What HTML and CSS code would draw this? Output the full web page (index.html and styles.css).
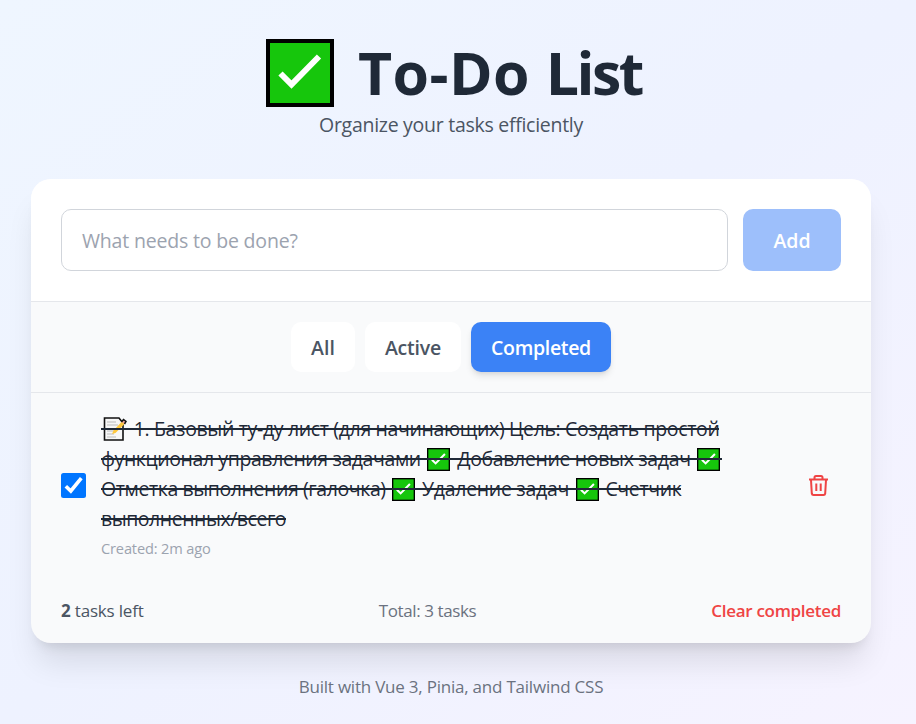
FILE: index.html
```html
<!DOCTYPE html>
<html lang="en">
<head>
<meta charset="utf-8">
<title>To-Do List</title>
<link rel="stylesheet" href="styles.css">
</head>
<body>
<svg class="sprite" aria-hidden="true">
  <symbol id="check" viewBox="0 0 68 68">
    <rect width="68" height="68" fill="#000"/>
    <rect x="4" y="4" width="60" height="60" fill="#16c60c"/>
    <path d="M14.500 34.500 25.500 45.500 53 17.500" fill="none" stroke="#fff" stroke-width="6"/>
  </symbol>
</svg>
<main class="page">
  <header class="header">
    <h1 class="title"><svg class="title-icon"><use href="#check"/></svg><span class="title-text">To-Do </span><span class="title-end">List</span></h1>
    <p class="subtitle"><span>Organize your tasks efficiently</span></p>
  </header>
  <section class="card">
    <form class="add-form">
      <div class="field"><span class="placeholder">What needs to be done?</span></div>
      <button class="add" type="button" disabled><span>Add</span></button>
    </form>
    <nav class="filters">
      <button class="filter filter-all" type="button">All</button>
      <button class="filter filter-active" type="button">Active</button>
      <button class="filter filter-completed" type="button">Completed</button>
    </nav>
    <article class="task">
      <svg class="checkbox" viewBox="0 0 25 25"><rect width="25" height="25" rx="2.5" fill="#0075ff"/><path d="M4.800 13.200 9.800 18 20.300 5.200" fill="none" stroke="#fff" stroke-width="3.6"/></svg>
      <div class="task-body">
        <p class="line l1"><svg class="memo" viewBox="0 0 24 26"><path d="M1.500 2H16L20 7V24H1.500Z" fill="#f7f7f7" stroke="#111" stroke-width="1.6"/><path d="M4 6h9M4 9h11M4 15h8M4 18h7M4 21h9" stroke="#bbb" stroke-width="1.2"/><path d="M9 18 10.500 14.500 19 5.500 22 7.500 12.500 17Z" fill="#ffc83d"/><path d="M18.500 6 20.500 3.500 23 5.500 21.500 8" fill="#f5a79b" stroke="#111" stroke-width="1.5"/></svg><span class="words"> 1. Базовый ту-ду лист (для начинающих) Цель: Создать простой</span></p>
        <p class="line l2"><span class="words w1">функционал управления задачами </span><svg class="emoji"><use href="#check"/></svg><span class="words w2"> Добавление новых задач </span><svg class="emoji"><use href="#check"/></svg></p>
        <p class="line l3"><span class="words w1">Отметка выполнения (галочка) </span><svg class="emoji"><use href="#check"/></svg><span class="words w2"> Удаление задач </span><svg class="emoji"><use href="#check"/></svg><span class="words"> Счетчик</span></p>
        <p class="line l4"><span class="words">выполненных/всего</span></p>
        <p class="created"><span>Created: 2m ago</span></p>
      </div>
      <svg class="trash" viewBox="0 0 25 25" fill="none" stroke="#ef4444" stroke-width="2"><path d="M3 6.500H22M8.500 6.500V4.500Q8.500 3 10 3H15Q16.500 3 16.500 4.500V6.500M5 7L5.800 20.500Q6 22 7.500 22H17.500Q19 22 19.200 20.500L20 7M10.300 10.500V18M14.700 10.500V18"/></svg>
    </article>
    <footer class="stats">
      <span class="left"><strong>2</strong> tasks left</span>
      <span class="total">Total: 3 tasks</span>
      <span class="clear">Clear completed</span>
    </footer>
  </section>
  <p class="credit"><span>Built with Vue 3, Pinia, and Tailwind CSS</span></p>
</main>
</body>
</html>
```
FILE: styles.css
```css
* { box-sizing: border-box; }
body { margin: 0; min-height: 724px; overflow: hidden; font-family: "Open Sans", "Noto Sans", sans-serif; font-size: 19.5px; line-height: 30px; color: #1f2937; background: linear-gradient(to bottom right, #eff6ff 0%, #eef2ff 50%, #f6f3ff 100%); }
p, h1 { margin: 0; }
svg { display: block; flex: none; }
.sprite { width: 0; height: 0; position: absolute; }
.page { width: 840px; margin-left: 31px; padding-top: 39px; }
.header { height: 140px; }
.title { display: flex; align-items: center; height: 68px; margin-left: 235px; font-size: 59px; line-height: 68px; font-weight: 700; white-space: pre; }
.title-icon { width: 68px; height: 68px; margin-right: 24px; }
.title-text { letter-spacing: .4px; }
.title-text, .title-end { margin-top: -2px; }
.title-end { letter-spacing: -2.5px; }
.subtitle { text-align: center; margin-top: 3px; color: #4b5563; letter-spacing: -.28px; }
.card { height: 464px; border-radius: 20px; overflow: hidden; background: #f9fafb; box-shadow: 0 25px 31px -6px rgba(0,0,0,.1), 0 10px 12px -7px rgba(0,0,0,.1); }
.add-form { display: flex; gap: 15px; height: 123px; padding: 30px; background: #fff; border-bottom: 1px solid #e5e7eb; }
.field { flex: 1; height: 62px; padding: 16px 20px; border: 1px solid #d1d5db; border-radius: 10px; color: #9ca3af; letter-spacing: -.18px; }
button { border: 0; padding: 2px 0 0; font: inherit; font-weight: 600; line-height: 30px; }
.add { width: 98px; height: 62px; border-radius: 10px; background: #9dbffb; color: #fff; }
.filters { display: flex; gap: 10px; justify-content: center; height: 91px; padding: 20px 0; border-bottom: 1px solid #e5e7eb; }
.filter { height: 50px; border-radius: 10px; background: #fff; color: #4b5563; }
.filter-all { width: 64px; }
.filter-active { width: 96px; letter-spacing: -.2px; }
.filter-completed { width: 140px; letter-spacing: -.32px; background: #3b82f6; color: #fff; box-shadow: 0 5px 7px -1px rgba(0,0,0,.1), 0 2px 4px -2px rgba(0,0,0,.1); }
.task { display: flex; align-items: center; height: 185px; padding: 0 30px; }
.checkbox { width: 25px; height: 25px; margin-right: 15px; }
.task-body { width: 694px; height: 145px; padding-top: 1px; }
.line { position: relative; display: flex; align-items: center; width: max-content; height: 30px; white-space: pre; letter-spacing: -.38px; }
.line::after { content: ""; position: absolute; left: 0; right: 0; top: 14px; height: 2px; background: #1f2937; }
.l1 { letter-spacing: -.35px; }
.l2 .w1, .l3 .w1 { letter-spacing: -.41px; }
.l2 .w2 { letter-spacing: -.35px; }
.l3 .w2 { letter-spacing: -.3px; }
.l4 { letter-spacing: -.47px; }
.emoji { width: 23px; height: 23px; margin: 0 2px; }
.memo { width: 24px; height: 26px; margin: 0 2px; }
.created { font-size: 14.6px; line-height: 20px; margin-top: 4px; color: #9ca3af; letter-spacing: -.15px; }
.trash { width: 25px; height: 25px; margin-left: 11px; }
.stats { display: flex; justify-content: space-between; padding: 20px 30px; font-size: 17px; line-height: 26px; white-space: nowrap; color: #4b5563; }
.left { letter-spacing: -.18px; }
.total { color: #6b7280; letter-spacing: -.4px; }
.clear { color: #ef4444; font-weight: 600; letter-spacing: -.3px; }
.credit { margin-top: 31px; text-align: center; font-size: 17px; line-height: 25px; color: #6b7280; letter-spacing: -.22px; }
```
